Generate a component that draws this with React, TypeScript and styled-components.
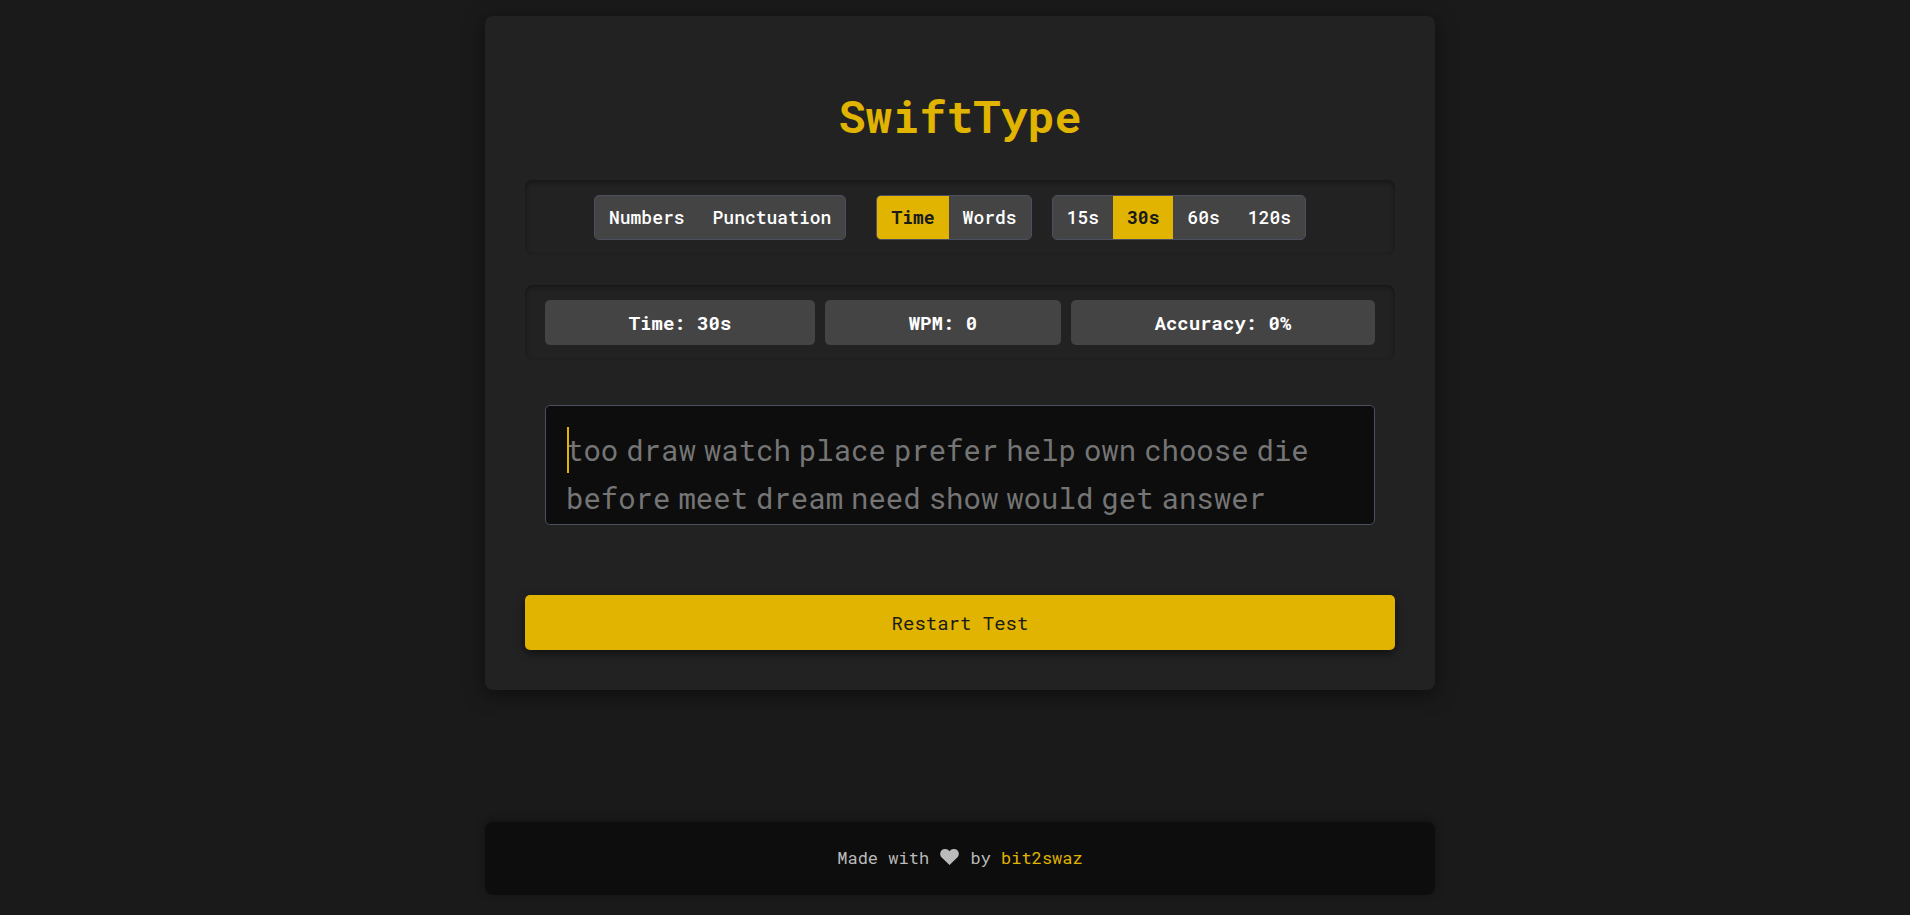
import React, { useState } from "react";
import styled, { createGlobalStyle } from "styled-components";

const color = {
  page: "#1a1a1a",
  card: "#222222",
  dark: "#0d0d0d",
  tile: "#444444",
  line: "#4a5060",
  accent: "#e0b400",
  white: "#ffffff",
  muted: "#bbbbbb",
  pending: "#757575",
};

const GlobalStyle = createGlobalStyle`
  *, *::before, *::after { box-sizing: border-box; }
  body {
    margin: 0;
    background: ${color.page};
    color: ${color.white};
    font-family: "Roboto Mono", "DejaVu Sans Mono", monospace;
    font-size: 18px;
  }
  button { font-family: inherit; cursor: pointer; }
`;

const Page = styled.div`
  min-height: 100vh;
  padding: 16px 20px 20px 30px;
  display: flex;
  flex-direction: column;
  align-items: center;
  gap: 40px;
`;

const Card = styled.main`
  width: 100%;
  max-width: 950px;
  padding: 40px;
  border-radius: 8px;
  background: ${color.card};
  box-shadow: 0 4px 20px rgba(0, 0, 0, 0.5);
  display: flex;
  flex-direction: column;
  gap: 30px;
`;

const Title = styled.h1`
  margin: 0;
  padding: 30px 0 4px;
  font-size: 45px;
  line-height: 60px;
  font-weight: 700;
  text-align: center;
  color: ${color.accent};
`;

const Panel = styled.section`
  display: flex;
  flex-wrap: wrap;
  justify-content: center;
  padding: 15px 20px;
  border-radius: 8px;
  box-shadow: inset 0 2px 5px rgba(0, 0, 0, 0.4);
`;

const Options = styled(Panel)`
  gap: 20px;
  padding-right: 40px;
`;

const Group = styled.div<{ $apart?: boolean }>`
  display: flex;
  height: 45px;
  margin-right: ${(p) => (p.$apart ? "10px" : "0")};
  border: 1px solid ${color.line};
  border-radius: 5px;
  overflow: hidden;
  background: ${color.tile};
`;

const Option = styled.button<{ $active?: boolean }>`
  padding: 0 14px;
  border: 0;
  font-size: 18px;
  line-height: 23px;
  font-weight: ${(p) => (p.$active ? 700 : 500)};
  background: ${(p) => (p.$active ? color.accent : color.tile)};
  color: ${(p) => (p.$active ? color.page : color.white)};
`;

const Stats = styled(Panel)`
  gap: 10px;
`;

const Stat = styled.div`
  flex: 1 1 auto;
  padding: 10px 15px;
  border-radius: 5px;
  background: ${color.tile};
  font-size: 19px;
  line-height: 25px;
  font-weight: 700;
  text-align: center;
`;

const TypingArea = styled.div`
  height: 120px;
  margin: 15px 20px 40px;
  padding: 20px;
  border: 1px solid ${color.line};
  border-radius: 5px;
  background: ${color.dark};
  overflow: hidden;
`;

const Words = styled.div`
  position: relative;
  display: flex;
  flex-wrap: wrap;
  column-gap: 8px;
  font-size: 29px;
  line-height: 48px;
  color: ${color.pending};
`;

const Caret = styled.span`
  position: absolute;
  left: 1px;
  top: 1px;
  width: 2px;
  height: 46px;
  background: ${color.accent};
`;

const Restart = styled.button`
  width: 100%;
  padding: 15px;
  border: 0;
  border-radius: 5px;
  background: ${color.accent};
  color: ${color.page};
  font-size: 19px;
  line-height: 25px;
  box-shadow: 0 4px 10px rgba(0, 0, 0, 0.5);
`;

const Footer = styled.footer`
  width: 100%;
  max-width: 950px;
  margin-top: auto;
  padding: 24px 20px 26px;
  border-radius: 8px;
  background: ${color.dark};
  color: ${color.muted};
  box-shadow: 0 -2px 10px rgba(0, 0, 0, 0.3);
  font-size: 17px;
  line-height: 23px;
  text-align: center;
`;

const Heart = styled.svg`
  width: 19px;
  height: 16px;
  margin: 0 1px;
  vertical-align: -1px;
`;

const Author = styled.a`
  color: ${color.accent};
  text-decoration: none;
`;

const modifiers = ["Numbers", "Punctuation"];
const modes = ["Time", "Words"];
const durations = [15, 30, 60, 120];
const words =
  "too draw watch place prefer help own choose die before meet dream need show would get answer".split(" ");

export default function App() {
  const [enabled, setEnabled] = useState<string[]>([]);
  const [mode, setMode] = useState("Time");
  const [duration, setDuration] = useState(30);

  const toggle = (name: string) =>
    setEnabled((list) => (list.includes(name) ? list.filter((n) => n !== name) : [...list, name]));

  return (
    <>
      <GlobalStyle />
      <Page>
        <Card>
          <Title>SwiftType</Title>
          <Options aria-label="Test options">
            <Group $apart role="group" aria-label="Modifiers">
              {modifiers.map((name) => (
                <Option
                  key={name}
                  type="button"
                  $active={enabled.includes(name)}
                  aria-pressed={enabled.includes(name)}
                  onClick={() => toggle(name)}
                >
                  {name}
                </Option>
              ))}
            </Group>
            <Group role="group" aria-label="Mode">
              {modes.map((name) => (
                <Option
                  key={name}
                  type="button"
                  $active={mode === name}
                  aria-pressed={mode === name}
                  onClick={() => setMode(name)}
                >
                  {name}
                </Option>
              ))}
            </Group>
            <Group role="group" aria-label="Duration">
              {durations.map((seconds) => (
                <Option
                  key={seconds}
                  type="button"
                  $active={duration === seconds}
                  aria-pressed={duration === seconds}
                  onClick={() => setDuration(seconds)}
                >
                  {`${seconds}s`}
                </Option>
              ))}
            </Group>
          </Options>
          <Stats aria-label="Results">
            <Stat>{`Time: ${duration}s`}</Stat>
            <Stat>WPM: 0</Stat>
            <Stat>Accuracy: 0%</Stat>
          </Stats>
          <TypingArea>
            <Words>
              <Caret />
              {words.map((word) => (
                <span key={word}>{word}</span>
              ))}
            </Words>
          </TypingArea>
          <Restart type="button">Restart Test</Restart>
        </Card>
        <Footer>
          Made with{" "}
          <Heart viewBox="0 0 19 16" aria-label="love" role="img">
            <path
              fill="currentColor"
              d="M9.5 16 1.7 8.6C-.2 6.7-.3 3.5 1.2 1.7 3.2-.6 7-.6 9 1.7l.5.6.5-.6c2-2.3 5.8-2.3 7.8 0 1.5 1.8 1.4 5-.5 6.9z"
            />
          </Heart>{" "}
          by <Author href="#bit2swaz">bit2swaz</Author>
        </Footer>
      </Page>
    </>
  );
}
